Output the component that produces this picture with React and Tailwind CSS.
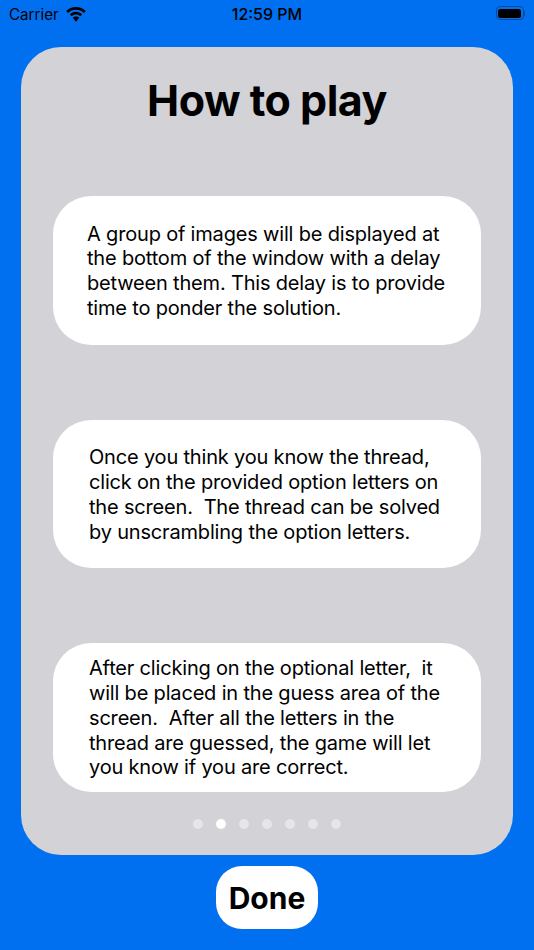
import React from 'react';

const font = "font-['Inter','Liberation_Sans',sans-serif]";

const cards = [
    {
        padding: 'pl-[34px]',
        lines: [
            'A group of images will be displayed at',
            'the bottom of the window with a delay',
            'between them. This delay is to provide',
            'time to ponder the solution.',
        ],
    },
    {
        padding: 'pl-[36px]',
        lines: [
            'Once you think you know the thread,',
            'click on the provided option letters on',
            'the screen.  The thread can be solved',
            'by unscrambling the option letters.',
        ],
    },
    {
        padding: 'pl-[36px]',
        lines: [
            'After clicking on the optional letter,  it',
            'will be placed in the guess area of the',
            'screen.  After all the letters in the',
            'thread are guessed, the game will let',
            'you know if you are correct.',
        ],
    },
];

const WifiIcon = () => (
    <svg width="20" height="15" viewBox="0 0 20 15" fill="#000">
        <path d="M10 0C6.200 0 2.800 1.500.2 3.900l1.900 2C4.200 4 7 2.800 10 2.800S15.800 4 17.900 5.900l1.900-2C17.200 1.500 13.800 0 10 0z" />
        <path d="M10 4.800c-2.400 0-4.500.9-6.200 2.400l1.900 2c1.200-1 2.700-1.600 4.300-1.600s3.100.6 4.300 1.600l1.900-2c-1.700-1.500-3.800-2.400-6.200-2.400z" />
        <path d="M10 9.600c-1.300 0-2.400.5-3.300 1.200L10 14.800l3.300-4c-.9-.7-2-1.200-3.300-1.200z" />
    </svg>
);

const BatteryIcon = () => (
    <div className="flex items-center">
        <div className="w-[28px] h-[14px] rounded-[4px] border border-[#0b4a94] p-[1.5px]">
            <div className="w-full h-full rounded-[2.5px] bg-black" />
        </div>
        <div className="w-[1.5px] h-[5px] rounded-r-sm bg-[#0b4a94]" />
    </div>
);

const StatusBar = () => (
    <div className="h-[47px] grid grid-cols-[1fr_auto_1fr] items-start pt-[5px] px-[9px] text-[15.2px] leading-[19px] text-black">
        <div className="flex items-center gap-[7px]">
            <span>Carrier</span>
            <WifiIcon />
        </div>
        <div className="text-center text-[16px] font-medium whitespace-nowrap">12:59 PM</div>
        <div className="flex justify-end pt-[1px]">
            <BatteryIcon />
        </div>
    </div>
);

const App = () => {
    return (
        <div className={`${font} w-[534px] h-[950px] bg-[#0070f0] flex flex-col overflow-hidden`}>
            <StatusBar />
            <div className="mx-[21px] h-[808px] rounded-[40px] bg-[#d2d2d7] flex flex-col items-center px-[32px]">
                <h1 className="mt-[25px] text-[43px] leading-[56px] font-bold text-black tracking-[-0.5px]">How to play</h1>
                <div className="mt-[68px] w-full flex flex-col gap-[75px]">
                    {cards.map((card) => (
                        <div
                            key={card.lines[0]}
                            className={`${card.padding} pt-[2px] h-[148.5px] rounded-[38px] bg-white flex flex-col justify-center text-[20px] leading-[24.8px] tracking-[-0.18px] text-black whitespace-pre`}
                        >
                            {card.lines.map((line) => (
                                <div key={line}>{line}</div>
                            ))}
                        </div>
                    ))}
                </div>
                <div className="mt-[27.500px] flex gap-[13px]">
                    {[0, 1, 2, 3, 4, 5, 6].map((dot) => (
                        <div key={dot} className={`w-[10px] h-[10px] rounded-full ${dot === 1 ? 'bg-white' : 'bg-[#e6e6e9]'}`} />
                    ))}
                </div>
            </div>
            <div className="mt-[11px] self-center w-[102px] h-[63px] rounded-[26px] bg-white flex items-center justify-center pt-[1px] text-[30px] font-bold text-black">
                Done
            </div>
        </div>
    );
};

export default App;
